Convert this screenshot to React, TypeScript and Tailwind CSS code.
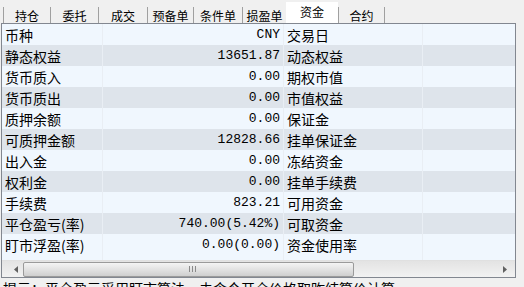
import React from "react";

const tabs = ["持仓", "委托", "成交", "预备单", "条件单", "损盈单", "资金", "合约"];
const tabW = [47, 48, 49, 46, 49, 44, 52, 47];

const rows: [string, string, string][] = [
  ["币种", "CNY", "交易日"],
  ["静态权益", "13651.87", "动态权益"],
  ["货币质入", "0.00", "期权市值"],
  ["货币质出", "0.00", "市值权益"],
  ["质押余额", "0.00", "保证金"],
  ["可质押金额", "12828.66", "挂单保证金"],
  ["出入金", "0.00", "冻结资金"],
  ["权利金", "0.00", "挂单手续费"],
  ["手续费", "823.21", "可用资金"],
  ["平仓盈亏(率)", "740.00(5.42%)", "可取资金"],
  ["盯市浮盈(率)", "0.00(0.00)", "资金使用率"],
];

const cjk = { fontFamily: '"Noto Sans CJK SC", "Noto Sans", sans-serif' };
const mono = { fontFamily: '"Liberation Mono", "Noto Sans CJK SC", monospace' };

export default function App() {
  return (
    <div className="w-[524px] h-[287px] bg-[#f0f0f0] overflow-hidden" style={cjk}>
      {/* tab bar */}
      <div className="h-[23px] flex items-end pl-[3px]">
        {tabs.map((t, i) => {
          const sel = t === "资金";
          return (
            <div
              key={t}
              style={{ width: tabW[i] }}
              className={
                "flex items-center justify-center text-[12px] leading-none text-black border-l border-[#a0a0a0] " +
                (sel ? "h-[21px] bg-white border-l-0 pb-[2px]" : "h-[16px] pt-[1px]") +
                (i === tabs.length - 1 ? " border-r" : "")
              }
            >
              {t}
            </div>
          );
        })}
      </div>
      {/* grid */}
      <div className="ml-[1px] w-[515px] h-[255px] border border-[#828790] bg-[#f0f8ff] flex flex-col">
        {rows.map((r, i) => (
          <div
            key={i}
            className={"h-[21px] flex shrink-0 " + (i % 2 === 0 ? "bg-[#f0f7fe]" : "bg-[#dee4eb]")}
          >
            <div className="w-[101px] border-r border-[#e9eef4] flex items-center pl-[3px] text-[14px] leading-none text-black">
              {r[0]}
            </div>
            <div
              className="w-[181px] border-r border-[#e9eef4] flex items-center justify-end pr-[3px] text-[13px] leading-none text-black"
              style={mono}
            >
              {r[1]}
            </div>
            <div className="w-[139px] border-r border-[#e9eef4] flex items-center pl-[3px] text-[14px] leading-none text-black">
              {r[2]}
            </div>
            <div className="flex-1" />
          </div>
        ))}
        <div className="flex-1 flex bg-[#f0f7fe]">
          <div className="w-[101px] border-r border-[#e9eef4]" />
          <div className="w-[181px] border-r border-[#e9eef4]" />
          <div className="w-[139px] border-r border-[#e9eef4]" />
        </div>
        {/* horizontal scrollbar */}
        <div className="h-[17px] shrink-0 flex items-center bg-gradient-to-b from-[#e3e3e3] to-[#f2f2f2] border-t border-[#e0e0e0]">
          <div className="w-[19px] h-full flex items-center justify-center pl-[8px]">
            <svg width="4" height="7" viewBox="0 0 4 7">
              <path d="M4 0 L0 3.5 L4 7 Z" fill="#606060" />
            </svg>
          </div>
          <div className="ml-[2px] w-[331px] h-[15px] rounded-[2px] border border-[#9a9a9a] bg-gradient-to-b from-[#f4f4f4] via-[#e2e2e2] to-[#cfcfcf] flex items-center justify-center">
            <div className="flex gap-[2px] ml-[8px]">
              <div className="w-[1px] h-[6px] bg-[#8a8a8a]" />
              <div className="w-[1px] h-[6px] bg-[#8a8a8a]" />
              <div className="w-[1px] h-[6px] bg-[#8a8a8a]" />
            </div>
          </div>
          <div className="flex-1" />
          <div className="w-[17px] h-full flex items-center justify-center pr-[4px]">
            <svg width="4" height="7" viewBox="0 0 4 7">
              <path d="M0 0 L4 3.5 L0 7 Z" fill="#606060" />
            </svg>
          </div>
        </div>
      </div>
      <div className="pl-[3px] pt-[3px] text-[14px] leading-none text-black whitespace-nowrap">
        提示：平仓盈亏采用盯市算法，未含今开仓价格取昨结算价计算。
      </div>
    </div>
  );
}
